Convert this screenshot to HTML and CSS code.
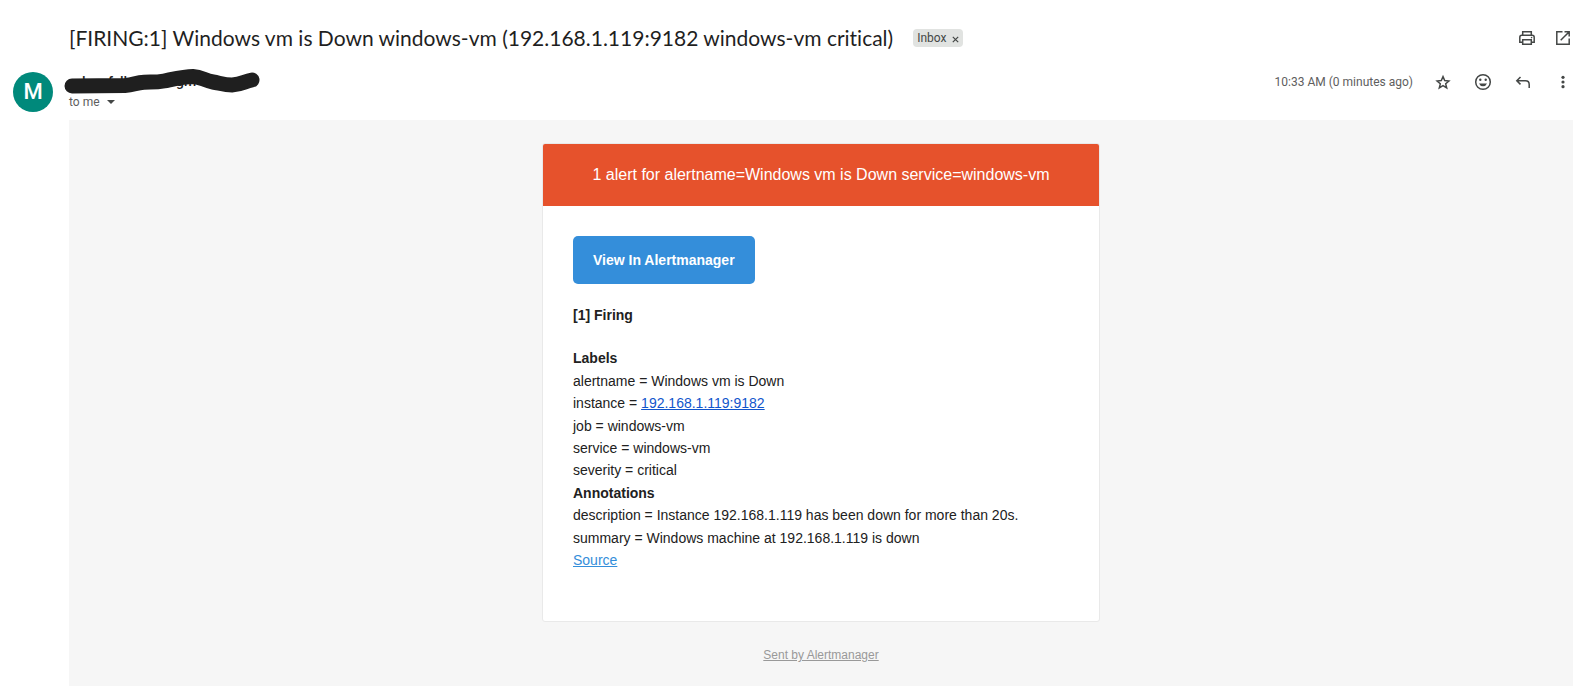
FILE: index.html
```html
<!DOCTYPE html>
<html lang="en">
<head>
<meta charset="utf-8">
<title>[FIRING:1] Windows vm is Down</title>
<link rel="stylesheet" href="styles.css">
</head>
<body>
<main class="message">
  <header class="subject-row">
    <h1 class="subject">[FIRING:1] Windows vm is Down windows-vm (192.168.1.119:9182 windows-vm critical)</h1>
    <span class="chip">Inbox
      <button class="chip-close" type="button" aria-label="Remove label Inbox"><svg width="7" height="7" viewBox="0 0 7 7"><path d="M.8.8l5.4 5.4M6.2.8L.8 6.2" fill="none" stroke="#444746" stroke-width="1.2"/></svg></button>
    </span>
    <div class="page-actions">
      <button class="icon" type="button" aria-label="Print all"><svg viewBox="0 0 20 20"><g fill="none" stroke="#444746" stroke-width="1.5"><path d="M5.7 7V3.7h8.6V7M5.7 14.2H2.8V9.4c0-1.3.8-2.1 2-2.1h10.4c1.2 0 2 .8 2 2.1v4.8h-2.9"/><path d="M5.7 11.7h8.6v4.6H5.7z"/></g><circle cx="14.6" cy="9.6" r=".8" fill="#444746"/></svg></button>
      <button class="icon" type="button" aria-label="Open in new window"><svg viewBox="0 0 20 20"><path d="M9.5 3.8H3.8v12.4h12.4v-5.7M11.5 3.8h4.7v4.7M16 4L7.7 12.3" fill="none" stroke="#444746" stroke-width="1.5"/></svg></button>
    </div>
  </header>

  <section class="sender-row">
    <div class="avatar">M</div>
    <div class="sender">
      <svg class="redaction" viewBox="0 0 198 28" role="img" aria-label="Sender hidden">
        <g class="sender-name"><text x="18" y="21">l</text><text x="44" y="21">f</text><text x="56" y="21">ll</text><text x="112" y="20">gm</text></g>
        <path d="M8 20L61 19.500C70 19 72 16.500 80 16.200S92 16.500 100 15C110 13 120 10.500 129 10.500C138 11 140 14.500 149 16C157 17.500 161 19 168 19C178 18.500 180 15.500 188 14" fill="none" stroke="#1f1f1f" stroke-width="15" stroke-linecap="round" stroke-linejoin="round"/>
      </svg>
      <button class="recipient" type="button">to me <svg width="8" height="4" viewBox="0 0 8 4"><path d="M0 0h8L4 4z" fill="#444746"/></svg></button>
    </div>
    <div class="mail-actions">
      <time class="date">10:33 AM (0 minutes ago)</time>
      <button class="icon" type="button" aria-label="Star"><svg viewBox="0 0 20 20"><path d="M10 4.600l1.700 4 4.200.4-3.200 2.800 1 4.200-3.700-2.300L6.300 16l1-4.200L4.100 9l4.200-.4z" fill="none" stroke="#444746" stroke-width="1.500"/></svg></button>
      <button class="icon" type="button" aria-label="Add reaction"><svg viewBox="0 0 20 20"><circle cx="10" cy="10" r="7.300" fill="none" stroke="#444746" stroke-width="1.500"/><circle cx="7.300" cy="7.800" r="1.200" fill="#444746"/><circle cx="12.700" cy="7.800" r="1.200" fill="#444746"/><path d="M6 11.500h8a4.300 4.300 0 0 1-8 0z" fill="#444746"/></svg></button>
      <button class="icon" type="button" aria-label="Reply"><svg viewBox="0 0 20 20"><path d="M7.500 5L3.800 8.700l3.700 3.700M4 8.700h8.500c2.200 0 3.700 1.500 3.700 3.700V16" fill="none" stroke="#444746" stroke-width="1.500"/></svg></button>
      <button class="icon" type="button" aria-label="More"><svg viewBox="0 0 20 20" fill="#444746"><circle cx="10" cy="5.300" r="1.600"/><circle cx="10" cy="10" r="1.600"/><circle cx="10" cy="14.700" r="1.600"/></svg></button>
    </div>
  </section>

  <article class="mail-body">
    <div class="card">
      <h2 class="card-head">1 alert for alertname=Windows vm is Down service=windows-vm</h2>
      <div class="card-content">
        <a class="view-button" href="#">View In Alertmanager</a>
        <h3 class="status">[1] Firing</h3>
        <p class="details">
          <strong>Labels</strong><br>
          alertname = Windows vm is Down<br>
          instance = <a class="address" href="#">192.168.1.119:9182</a><br>
          job = windows-vm<br>
          service = windows-vm<br>
          severity = critical<br>
          <strong>Annotations</strong><br>
          description = Instance 192.168.1.119 has been down for more than 20s.<br>
          summary = Windows machine at 192.168.1.119 is down<br>
          <a class="source" href="#">Source</a>
        </p>
      </div>
    </div>
    <a class="sent-by" href="#">Sent by Alertmanager</a>
  </article>
</main>
</body>
</html>
```
FILE: styles.css
```css
* { box-sizing: border-box; }

body {
  margin: 0;
  background: #fff;
  color: #1f1f1f;
  font-family: Roboto, sans-serif;
  font-size: 12px;
}

button {
  padding: 0;
  border: 0;
  background: none;
  color: inherit;
  font: inherit;
  cursor: pointer;
}

.message {
  display: flex;
  flex-direction: column;
  min-height: 100vh;
  padding: 24px 16px 0 13px;
}

.subject-row {
  display: flex;
  align-items: center;
  padding-left: 56px;
}

.subject {
  margin: 0;
  font-family: Lato, sans-serif;
  font-size: 21px;
  font-variant-ligatures: none;
  font-weight: 400;
  line-height: 28px;
}

.chip {
  display: flex;
  align-items: center;
  gap: 5px;
  height: 18px;
  margin-left: 20px;
  padding: 0 4px;
  border-radius: 4px;
  background: #e1e3e1;
  color: #444746;
}

.chip-close { display: flex; padding-top: 2px; }

.page-actions {
  display: flex;
  gap: 16px;
  margin-left: auto;
}

.icon { width: 20px; height: 20px; }
.icon svg { display: block; width: 20px; height: 20px; }

.sender-row {
  display: flex;
  align-items: flex-start;
  gap: 16px;
  padding: 14px 0 8px;
}

.avatar {
  width: 40px;
  height: 40px;
  margin-top: 6px;
  border-radius: 50%;
  background: #00897b;
  color: #fff;
  font: 500 22px/40px Roboto, sans-serif;
  text-align: center;
}

.sender {
  display: flex;
  flex-direction: column;
  align-items: flex-start;
}

.redaction {
  display: block;
  width: 198px;
  height: 28px;
  margin-left: -5px;
}

.sender-name {
  fill: #1f1f1f;
  font-size: 14px;
  font-weight: 500;
}

.recipient {
  display: flex;
  align-items: center;
  gap: 7px;
  line-height: 16px;
  color: #5e5e5e;
}

.mail-actions {
  display: flex;
  align-items: center;
  gap: 20px;
  margin: 6px 0 0 auto;
}

.date { color: #5e5e5e; }

.mail-body {
  display: flex;
  flex: 1;
  flex-direction: column;
  align-items: center;
  margin-left: 56px;
  padding: 23px 20px;
  background: #f6f6f6;
  color: #212121;
  font-family: "Liberation Sans", Arial, sans-serif;
}

.card {
  width: 100%;
  max-width: 558px;
  overflow: hidden;
  border: 1px solid #e9e9e9;
  border-radius: 3px;
  background: #fff;
}

.card-head {
  margin: 0;
  padding: 20px;
  background: #e6522c;
  color: #fff;
  font-size: 16px;
  font-weight: 400;
  line-height: 22px;
  text-align: center;
}

.card-content {
  padding: 30px 30px 50px;
  font-size: 14px;
  line-height: 1.6;
}

.view-button {
  display: inline-block;
  padding: 10px 20px;
  border-radius: 5px;
  background: #348eda;
  color: #fff;
  font-weight: 700;
  line-height: 28px;
  text-decoration: none;
}

.status {
  margin: 20px 0 21px;
  font-size: 14px;
}

.details { margin: 0; }

.address { color: #1155cc; }
.source { color: #348eda; }

.sent-by {
  margin-top: 24px;
  color: #999;
  line-height: 18px;
}
```
